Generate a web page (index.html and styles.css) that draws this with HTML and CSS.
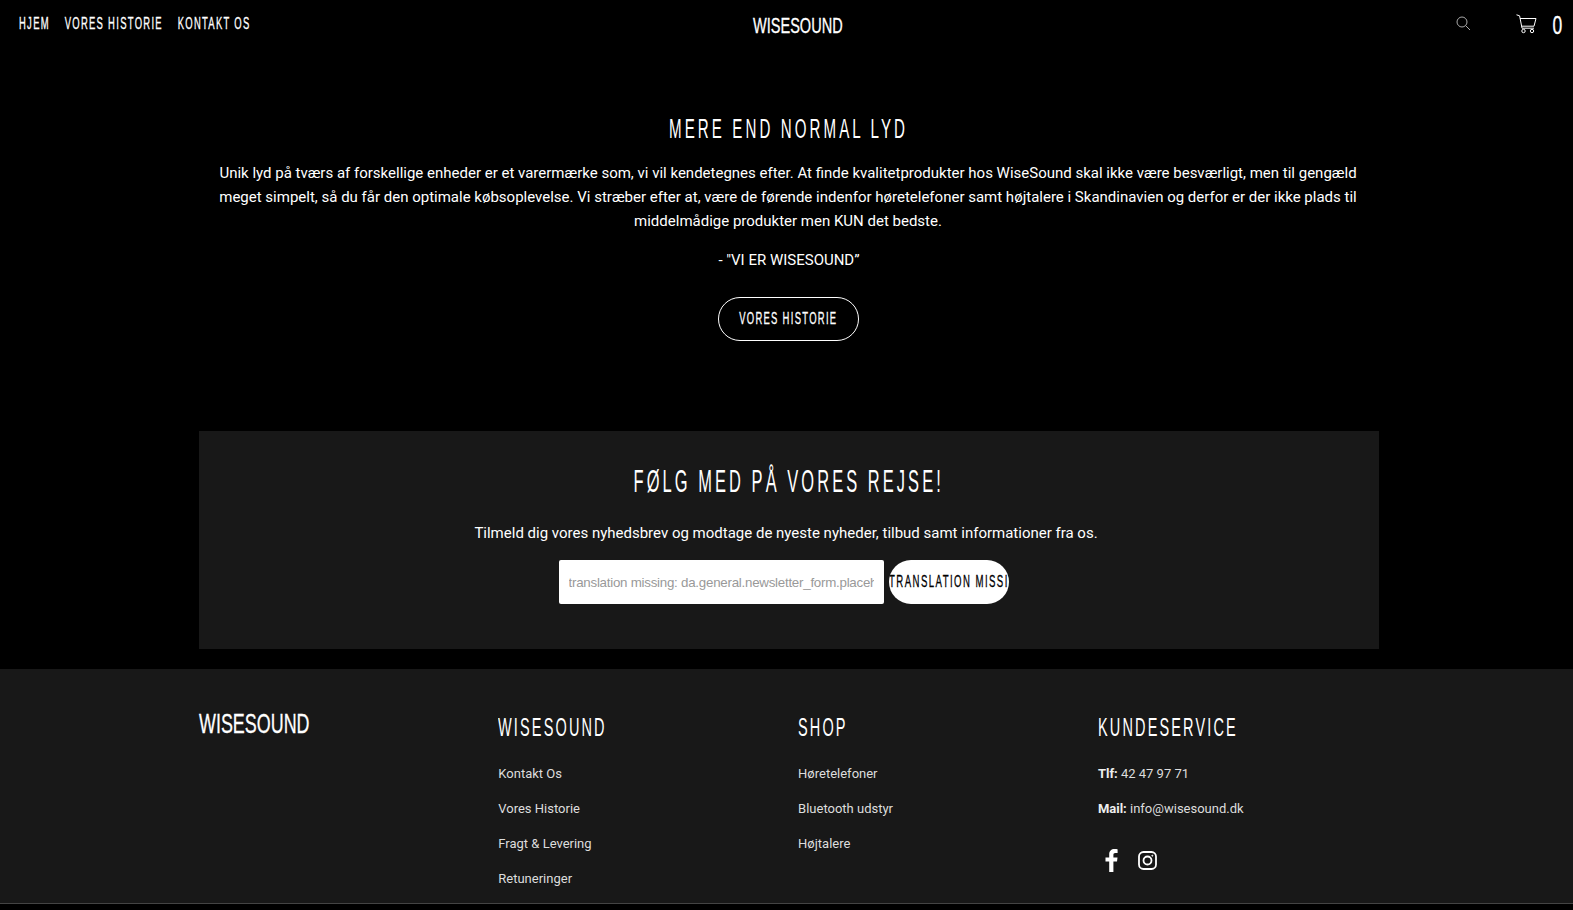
FILE: index.html

```html
<!DOCTYPE html>
<html lang="da">

<head>
    <meta charset="UTF-8">
    <title>WiseSound</title>
    <link rel="stylesheet" href="styles.css">
</head>

<body>
    <header class="top">
        <nav class="top_nav">
            <a href="#">HJEM</a>
            <a href="#">VORES HISTORIE</a>
            <a href="#">KONTAKT OS</a>
        </nav>
        <a class="top_logo" href="#">WISESOUND</a>
        <div class="top_tools">
            <svg class="icon_search" width="15" height="15" viewBox="0 0 15 15" fill="none" stroke="#aaa" stroke-width="1">
                <circle cx="6" cy="6" r="5"></circle>
                <path d="M9.6 9.6L14 14"></path>
            </svg>
            <svg class="icon_cart" width="21" height="20" viewBox="0 0 21 20" fill="none" stroke="#fff" stroke-width="1">
                <path d="M0.5 0.8L3.6 1.8L6 14.2H18"></path>
                <path d="M4 4.5H20L18 12.2H5.5"></path>
                <circle cx="7.5" cy="17" r="1.7"></circle>
                <circle cx="16" cy="17" r="1.7"></circle>
            </svg>
            <span class="cart_count">0</span>
        </div>
    </header>

    <section class="intro">
        <h2 class="intro_title">MERE END NORMAL LYD</h2>
        <p class="intro_text">Unik lyd på tværs af forskellige enheder er et varermærke som, vi vil kendetegnes efter. At finde kvalitetprodukter hos WiseSound skal ikke være besværligt, men til gengæld meget simpelt, så du får den optimale købsoplevelse. Vi stræber efter at, være de førende indenfor høretelefoner samt højtalere i Skandinavien og derfor er der ikke plads til middelmådige produkter men KUN det bedste.</p>
        <p class="intro_quote">- "VI ER WISESOUND”</p>
        <a class="btn_outline" href="#"><span>VORES HISTORIE</span></a>
    </section>

    <section class="news">
        <h2 class="news_title">FØLG MED PÅ VORES REJSE!</h2>
        <p class="news_text">Tilmeld dig vores nyhedsbrev og modtage de nyeste nyheder, tilbud samt informationer fra os.</p>
        <form class="news_form">
            <input class="news_input" type="text" placeholder="translation missing: da.general.newsletter_form.placeholder">
            <button class="news_btn" type="button"><span>TRANSLATION MISSING: DA.GENERAL.NEWSLETTER_FORM.SUBMIT</span></button>
        </form>
    </section>

    <footer class="foot">
        <div class="foot_inner">
            <div class="foot_col">
                <a class="foot_logo" href="#">WISESOUND</a>
            </div>
            <div class="foot_col">
                <h3 class="foot_title">WISESOUND</h3>
                <a class="foot_link" href="#">Kontakt Os</a>
                <a class="foot_link" href="#">Vores Historie</a>
                <a class="foot_link" href="#">Fragt &amp; Levering</a>
                <a class="foot_link" href="#">Retuneringer</a>
            </div>
            <div class="foot_col">
                <h3 class="foot_title">SHOP</h3>
                <a class="foot_link" href="#">Høretelefoner</a>
                <a class="foot_link" href="#">Bluetooth udstyr</a>
                <a class="foot_link" href="#">Højtalere</a>
            </div>
            <div class="foot_col">
                <h3 class="foot_title">KUNDESERVICE</h3>
                <p class="foot_link"><b>Tlf:</b> 42 47 97 71</p>
                <p class="foot_link"><b>Mail:</b> info@wisesound.dk</p>
                <div class="foot_social">
                    <svg width="13" height="23" viewBox="0 0 13 23" fill="#fff">
                        <path d="M8.4 23V12.6H12L12.5 8.5H8.4V6C8.4 4.8 8.8 4 10.4 4H12.6V0.3C12.2 0.2 10.9 0.1 9.5 0.1C6.3 0.1 4.2 2 4.2 5.5V8.5H0.5V12.6H4.2V23Z"></path>
                    </svg>
                    <svg width="19" height="19" viewBox="0 0 19 19" fill="none" stroke="#fff" stroke-width="1.8">
                        <rect x="1" y="1" width="17" height="17" rx="4.5"></rect>
                        <circle cx="9.5" cy="9.5" r="4"></circle>
                        <circle cx="14.3" cy="4.7" r="0.5" fill="#fff" stroke-width="1"></circle>
                    </svg>
                </div>
            </div>
        </div>
    </footer>
</body>

</html>
```

FILE: styles.css

```css
* {
    box-sizing: border-box;
}

html,
body {
    height: 910px;
    overflow: hidden;
}

body {
    margin: 0;
    background: #000;
    color: #fff;
    font-family: Roboto, sans-serif;
}

a {
    color: inherit;
    text-decoration: none;
}

h2,
h3,
p {
    margin: 0;
    font-weight: 400;
}

/* no condensed font here, so the headline type is squeezed with scaleX */
.top_nav,
.top_logo,
.cart_count,
.intro_title,
.btn_outline span,
.news_title,
.news_btn span,
.foot_logo,
.foot_title {
    font-family: "Liberation Sans", sans-serif;
}

/* the squeeze thins the stems of the smaller type, this puts some back */
.top_nav,
.top_logo,
.cart_count,
.btn_outline span,
.news_btn span,
.foot_logo {
    -webkit-text-stroke: 0.3px;
}

.top {
    display: flex;
    align-items: flex-start;
    justify-content: space-between;
    height: 110px;
    padding: 13px 12px 0 19px;
}

.top_nav {
    display: flex;
    flex: none;
    gap: 25px;
    width: 500px;
    margin-top: 1px;
    font-size: 16px;
    line-height: 20px;
    letter-spacing: 2.2px;
    transform: scaleX(0.59);
    transform-origin: left;
}

.top_logo {
    margin-left: 16px;
    font-size: 22px;
    line-height: 26px;
    transform: scaleX(0.66);
}

.top_tools {
    display: flex;
    flex: none;
    align-items: flex-start;
    justify-content: flex-end;
    width: 500px;
}

.icon_search {
    margin: 3px 45px 0 0;
}

.icon_cart {
    margin: 1px 14px 0 0;
}

.cart_count {
    width: 10px;
    font-size: 25px;
    line-height: 24px;
    text-align: center;
    transform: scaleX(0.7);
}

.intro {
    display: flex;
    flex-direction: column;
    align-items: center;
    width: 1180px;
    margin-left: 199px;
    padding: 0 20px;
    text-align: center;
}

.intro_title {
    font-size: 27px;
    line-height: 38px;
    letter-spacing: 5.5px;
    white-space: nowrap;
    transform: scaleX(0.56);
}

.intro_text {
    margin: 13px 2px 0 0;
    font-size: 15px;
    line-height: 24px;
}

.intro_quote {
    margin-top: 15px;
    font-size: 15px;
    line-height: 24px;
}

.btn_outline {
    display: flex;
    justify-content: center;
    width: 141px;
    height: 44px;
    margin: 25px 2px 0 0;
    border: 1px solid #fff;
    border-radius: 22px;
    font-size: 16px;
    line-height: 42px;
    letter-spacing: 2.2px;
}

.btn_outline span {
    flex: none;
    transform: scaleX(0.59);
}

.news {
    width: 1180px;
    height: 218px;
    margin: 90px 0 20px 199px;
    padding: 30px 0 0;
    background: #181818;
    text-align: center;
}

.news_title {
    display: inline-block;
    font-size: 31px;
    line-height: 42px;
    letter-spacing: 5.8px;
    white-space: nowrap;
    transform: scaleX(0.53);
}

.news_text {
    margin-top: 18px;
    padding-right: 6px;
    font-size: 15px;
    line-height: 24px;
}

.news_form {
    display: flex;
    justify-content: center;
    gap: 5px;
    margin: 15px 11px 0 0;
}

.news_input {
    width: 325px;
    height: 44px;
    padding: 0 10px;
    border: 0;
    border-radius: 2px;
    background: #fff;
    font-family: "Liberation Sans", sans-serif;
    font-size: 13.333px;
    letter-spacing: -0.25px;
}

.news_input::placeholder {
    color: #999;
}

.news_btn {
    width: 120px;
    height: 44px;
    padding: 0;
    border: 0;
    border-radius: 22px;
    background: #fff;
    color: #000;
    font-size: 16px;
    letter-spacing: 2.4px;
    overflow: hidden;
    white-space: nowrap;
    text-align: left;
}

.news_btn span {
    display: inline-block;
    transform: scaleX(0.6);
    transform-origin: left;
}

.foot {
    height: 235px;
    border-bottom: 1px solid #444;
    background: #181818;
    overflow: hidden;
}

.foot_inner {
    display: grid;
    grid-template-columns: repeat(4, 299.8px);
    margin-left: 198.5px;
    padding-top: 38px;
}

.foot_logo {
    display: block;
    margin-top: 2px;
    font-size: 28px;
    line-height: 30px;
    transform: scaleX(0.64);
    transform-origin: left;
}

.foot_title {
    margin: 3px 0 20px;
    font-size: 25px;
    line-height: 34px;
    letter-spacing: 3.7px;
    transform: scaleX(0.58);
    transform-origin: left;
}

.foot_link {
    display: block;
    margin-bottom: 15px;
    color: #ddd;
    font-size: 13px;
    line-height: 20px;
}

.foot_link b {
    color: #eee;
    font-weight: 700;
}

.foot_social {
    display: flex;
    align-items: center;
    gap: 20px;
    margin: 30px 0 0 7px;
}
```
